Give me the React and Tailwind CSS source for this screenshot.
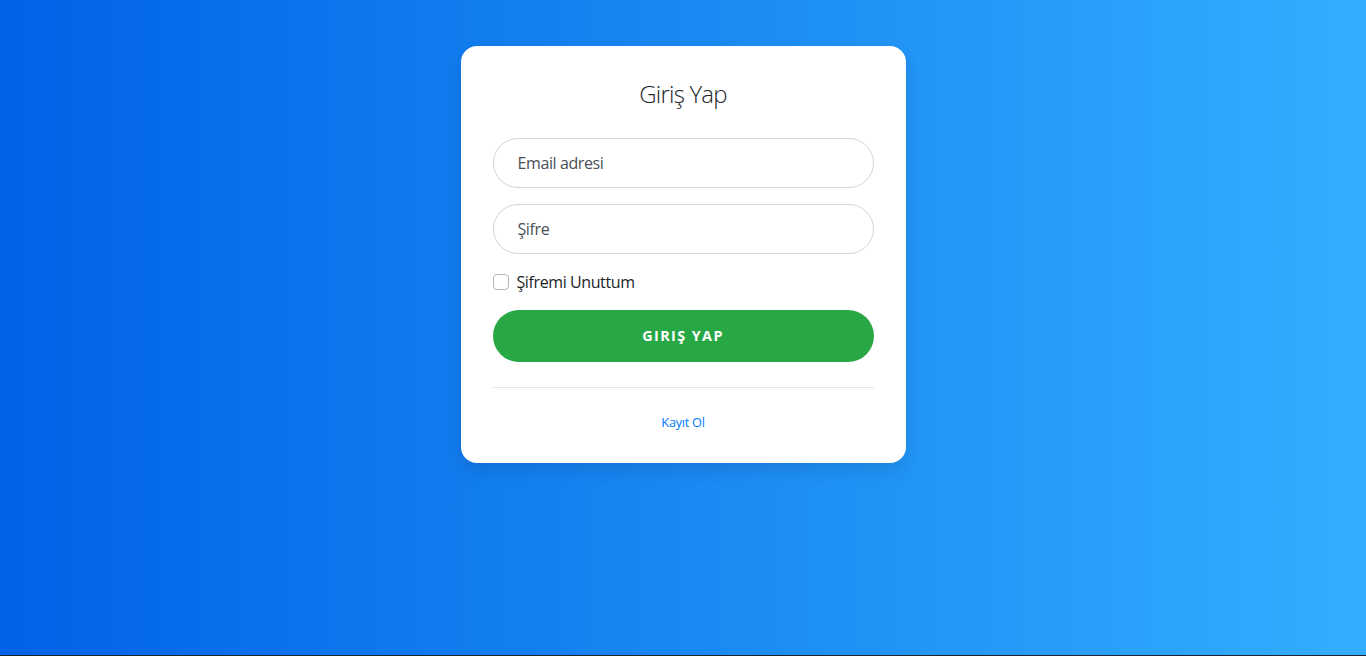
export default function App() {
  return (
    <div
      className="min-h-[656px] w-full bg-[linear-gradient(to_right,#0062E6,#33AEFF)] border-b border-[#1e2430] flex justify-center pt-[46px]"
      style={{ fontFamily: '"Open Sans", "Noto Sans", sans-serif' }}
    >
      <div className="w-[445px] h-[417px] bg-white rounded-2xl shadow-[0_8px_16px_0_rgba(0,0,0,0.1)] px-8 pt-[32px] flex flex-col">
        <h5 className="text-center text-[24px] leading-[29px] font-light text-[#212529] mt-[1px] tracking-[-0.8px]">Giriş Yap</h5>
        <form className="mt-[30px] flex flex-col" onSubmit={(e) => e.preventDefault()}>
          <input
            type="email"
            placeholder="Email adresi"
            className="h-[50px] w-full rounded-full border border-[#ced4da] px-6 text-[16px] tracking-[-0.4px] text-[#495057] placeholder:text-[#495057] outline-none"
          />
          <input
            type="password"
            placeholder="Şifre"
            className="mt-[16px] h-[50px] w-full rounded-full border border-[#ced4da] px-6 text-[16px] tracking-[-0.4px] text-[#495057] placeholder:text-[#495057] outline-none"
          />
          <label className="mt-[19px] flex items-center gap-2 h-[18px] text-[16px] tracking-[-0.4px] text-[#212529]">
            <span className="w-4 h-4 rounded-[4px] border border-[#adb5bd] bg-white shrink-0"></span>
            <span>Şifremi Unuttum</span>
          </label>
          <button
            type="submit"
            className="mt-[19px] h-[52px] w-full rounded-full bg-[#28a745] text-white text-[14.4px] font-bold tracking-[1.4px]"
          >
            GIRIŞ YAP
          </button>
          <hr className="mt-[25px] border-0 border-t border-[rgba(0,0,0,0.1)]" />
          <div className="mt-[25px] text-center text-[12.8px] leading-[19px] tracking-[-0.3px]">
            <a href="#" className="text-[#007bff]">Kayıt Ol</a>
          </div>
        </form>
      </div>
    </div>
  );
}
